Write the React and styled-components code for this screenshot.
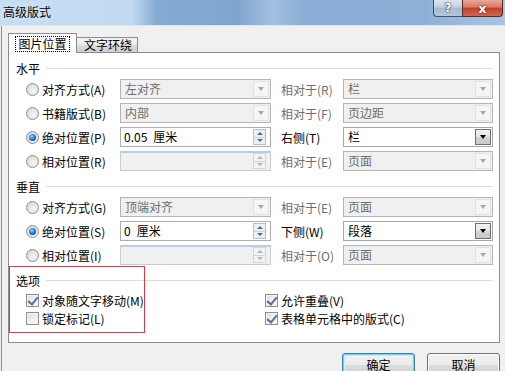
import React from "react";
import styled, { createGlobalStyle } from "styled-components";

const GlobalStyle = createGlobalStyle`
  html, body {
    margin: 0;
    padding: 0;
    background: #f0f0f0;
  }
  * {
    box-sizing: border-box;
  }
`;

const FONT = `"Noto Sans CJK SC", "DejaVu Sans", sans-serif`;

const horizontalRows = [
  { label: "对齐方式(A)", kind: "select", value: "左对齐", side: "相对于(R)", sideValue: "栏" },
  { label: "书籍版式(B)", kind: "select", value: "内部", side: "相对于(F)", sideValue: "页边距" },
  { label: "绝对位置(P)", kind: "spin", value: "0.05\u2002厘米", side: "右侧(T)", sideValue: "栏", active: true },
  { label: "相对位置(R)", kind: "spin", value: "", side: "相对于(E)", sideValue: "页面" },
];

const verticalRows = [
  { label: "对齐方式(G)", kind: "select", value: "顶端对齐", side: "相对于(E)", sideValue: "页面" },
  { label: "绝对位置(S)", kind: "spin", value: "0\u2002厘米", side: "下侧(W)", sideValue: "段落", active: true },
  { label: "相对位置(I)", kind: "spin", value: "", side: "相对于(O)", sideValue: "页面" },
];

const App = () => {
  return (
    <Window>
      <GlobalStyle />
      <TitleBar>
        <Title>高级版式</Title>
        <CaptionButtons>
          <HelpBtn>?</HelpBtn>
          <CloseBtn>x</CloseBtn>
        </CaptionButtons>
      </TitleBar>
      <Frame>
        <TabRow>
          <Tab $active>
            <FocusRing>图片位置</FocusRing>
          </Tab>
          <Tab>文字环绕</Tab>
        </TabRow>
        <Panel>
          <Section>
            <SectionHeader>
              <span>水平</span>
              <Rule />
            </SectionHeader>
            <PositionGrid>
              {horizontalRows.map((row) => (
                <PositionRow key={row.label} row={row} />
              ))}
            </PositionGrid>
          </Section>
          <Section>
            <SectionHeader>
              <span>垂直</span>
              <Rule />
            </SectionHeader>
            <PositionGrid>
              {verticalRows.map((row) => (
                <PositionRow key={row.label} row={row} />
              ))}
            </PositionGrid>
          </Section>
          <OptionsSection>
            <SectionHeader>
              <span>选项</span>
              <Rule />
            </SectionHeader>
            <OptionsGrid>
              <CheckRow>
                <Checkbox $checked />
                <span>对象随文字移动(M)</span>
              </CheckRow>
              <CheckRow>
                <Checkbox $checked />
                <span>允许重叠(V)</span>
              </CheckRow>
              <CheckRow>
                <Checkbox />
                <span>锁定标记(L)</span>
              </CheckRow>
              <CheckRow>
                <Checkbox $checked />
                <span>表格单元格中的版式(C)</span>
              </CheckRow>
            </OptionsGrid>
            <Annotation />
          </OptionsSection>
        </Panel>
        <ButtonRow>
          <DialogButton $default>确定</DialogButton>
          <DialogButton>取消</DialogButton>
        </ButtonRow>
      </Frame>
    </Window>
  );
};

const PositionRow = ({ row }) => {
  const active = !!row.active;
  return (
    <>
      <RadioLabel>
        <Radio $checked={active} />
        <span>{row.label}</span>
      </RadioLabel>
      {row.kind === "select" ? (
        <Select $disabled>
          <SelectValue>{row.value}</SelectValue>
          <DropButton $disabled>
            <Arrow $disabled />
          </DropButton>
        </Select>
      ) : (
        <SpinBox $disabled={!active}>
          <SelectValue>{row.value}</SelectValue>
          <Spinner $disabled={!active}>
            <SpinHalf>
              <SpinArrow $up $disabled={!active} />
            </SpinHalf>
            <SpinHalf>
              <SpinArrow $disabled={!active} />
            </SpinHalf>
          </Spinner>
        </SpinBox>
      )}
      <SideLabel $disabled={!active}>{row.side}</SideLabel>
      <Select $disabled={!active}>
        <SelectValue>{row.sideValue}</SelectValue>
        <DropButton $disabled={!active}>
          <Arrow $disabled={!active} />
        </DropButton>
      </Select>
    </>
  );
};

const Window = styled.div`
  width: 505px;
  height: 371px;
  overflow: hidden;
  background: #f0f0f0;
  font-family: ${FONT};
  font-size: 12px;
  color: #000;
  display: flex;
  flex-direction: column;
`;

const TitleBar = styled.div`
  height: 26px;
  flex: none;
  display: flex;
  justify-content: space-between;
  align-items: flex-start;
  background: linear-gradient(
    90deg,
    #c6def3 0%,
    #c2dbf2 26%,
    #86abd3 31%,
    #7fa5cf 47%,
    #a2c0e1 54%,
    #8aaed6 60%,
    #8eb0d7 84%,
    #a9c4e3 100%
  );
  border-bottom: 1px solid #dce6f1;
`;

const Title = styled.div`
  padding: 4px 0 0 3px;
  line-height: 16px;
  font-size: 12px;
  color: #000;
  text-shadow: 0 0 6px #e6f2ff;
`;

const CaptionButtons = styled.div`
  display: flex;
  margin-right: 2px;
`;

const CaptionBase = styled.div`
  height: 17px;
  display: flex;
  align-items: center;
  justify-content: center;
  color: #fff;
  font-family: "DejaVu Sans", sans-serif;
  font-weight: bold;
  border: 1px solid #42526a;
  border-top: none;
  text-shadow: 0 0 1px #1d2b40, 0 0 2px #1d2b40;
  line-height: 1;
`;

const HelpBtn = styled(CaptionBase)`
  width: 29px;
  font-size: 12px;
  border-right: none;
  border-bottom-left-radius: 4px;
  background: linear-gradient(#dbe4ef 0%, #c3d1e2 45%, #a7b9d0 50%, #b6c7dc 100%);
`;

const CloseBtn = styled(CaptionBase)`
  width: 41px;
  font-size: 13px;
  border-bottom-right-radius: 4px;
  border-color: #5a2a24;
  background: linear-gradient(#e9a99a 0%, #d67a66 45%, #c0412a 50%, #d3664b 100%);
  text-shadow: 0 0 1px #5a1a10, 0 0 2px #5a1a10;
`;

const Frame = styled.div`
  flex: 1;
  margin-left: 1px;
  border-left: 1px solid #7f90a8;
  padding: 7px 5px 0 6px;
  display: flex;
  flex-direction: column;
`;

const TabRow = styled.div`
  display: flex;
  align-items: flex-end;
  height: 19px;
  position: relative;
  z-index: 1;
`;

const Tab = styled.div`
  display: flex;
  align-items: center;
  justify-content: center;
  border: 1px solid #8c8e94;
  border-bottom: none;
  line-height: 14px;
  ${(p) =>
    p.$active
      ? `
    width: 69px;
    height: 20px;
    margin-bottom: -1px;
    background: #fff;
    padding-top: 1px;
  `
      : `
    width: 62px;
    height: 15px;
    margin-left: -1px;
    background: linear-gradient(#f3f3f3 0%, #ebebeb 50%, #dddddd 51%, #cfcfcf 100%);
    padding-left: 2px;
  `}
`;

const FocusRing = styled.span`
  display: inline-block;
  padding: 0 2px;
  outline: 1px dotted #000;
  outline-offset: 0;
  line-height: 14px;
`;

const Panel = styled.div`
  width: 492px;
  height: 291px;
  background: #fff;
  border: 1px solid #898c95;
  padding: 8px 6px 0 7px;
  display: flex;
  flex-direction: column;
  gap: 8px;
`;

const Section = styled.div`
  display: flex;
  flex-direction: column;
  gap: 2px;
`;

const SectionHeader = styled.div`
  display: flex;
  align-items: center;
  height: 16px;
  line-height: 16px;
  gap: 6px;
`;

const Rule = styled.div`
  flex: 1;
  height: 1px;
  background: #d5dfe5;
  margin-top: -1px;
`;

const PositionGrid = styled.div`
  display: grid;
  grid-template-columns: 94px 151px 72px 150px;
  grid-auto-rows: 20px;
  row-gap: 4px;
  padding-left: 10px;
  align-items: center;
`;

const RadioLabel = styled.label`
  display: flex;
  align-items: center;
  gap: 3px;
  white-space: nowrap;
`;

const Radio = styled.span`
  width: 13px;
  height: 13px;
  border-radius: 50%;
  border: 1px solid #8e8f8f;
  background: radial-gradient(circle at 60% 65%, #f6f6f6 0%, #e2e2e2 55%, #cdcdcd 100%);
  display: flex;
  align-items: center;
  justify-content: center;
  &::after {
    content: "";
    display: ${(p) => (p.$checked ? "block" : "none")};
    width: 7px;
    height: 7px;
    border-radius: 50%;
    background: radial-gradient(circle at 40% 35%, #8fd3ff 0%, #2a8ee0 40%, #0b4f9e 75%, #063a78 100%);
  }
`;

const fieldBorder = (p) => (p.$disabled ? "#b5b5b5" : "#a4a9b0");

const Select = styled.div`
  height: 20px;
  display: flex;
  align-items: stretch;
  border: 1px solid ${fieldBorder};
  background: ${(p) => (p.$disabled ? "#f0f0f0" : "#fff")};
  color: ${(p) => (p.$disabled ? "#6d6d6d" : "#000")};
  padding: 1px;
`;

const SelectValue = styled.span`
  flex: 1;
  padding-left: 3px;
  line-height: 16px;
  white-space: pre;
  overflow: hidden;
`;

const DropButton = styled.span`
  width: 16px;
  display: flex;
  align-items: center;
  justify-content: center;
  border: 1px solid ${(p) => (p.$disabled ? "#e2e2e2" : "#707070")};
  background: ${(p) =>
    p.$disabled ? "#f5f5f5" : "linear-gradient(#f2f2f2 0%, #e6e6e6 50%, #d4d4d4 51%, #c8c8c8 100%)"};
`;

const Arrow = styled.span`
  width: 0;
  height: 0;
  border-left: 3.5px solid transparent;
  border-right: 3.5px solid transparent;
  border-top: 4px solid ${(p) => (p.$disabled ? "#a6a6a6" : "#000")};
`;

const SpinBox = styled.div`
  height: 20px;
  display: flex;
  align-items: stretch;
  border: 1px solid ${(p) => (p.$disabled ? "#c9ccd1" : "#abadb3")};
  border-top-color: ${(p) => (p.$disabled ? "#b4cfeb" : "#abadb3")};
  border-top-width: ${(p) => (p.$disabled ? "2px" : "1px")};
  background: ${(p) => (p.$disabled ? "#f0f0f0" : "#fff")};
  padding: ${(p) => (p.$disabled ? "0 4px 1px 0" : "1px 4px 1px 0")};
`;

const Spinner = styled.span`
  width: 13px;
  display: flex;
  flex-direction: column;
  border: 1px solid ${(p) => (p.$disabled ? "#d6d6d6" : "#b8bcc3")};
  background: ${(p) => (p.$disabled ? "#f4f4f4" : "#eef0f4")};
`;

const SpinHalf = styled.span`
  flex: 1;
  display: flex;
  align-items: center;
  justify-content: center;
  & + & {
    border-top: 1px solid #d0d3d8;
  }
`;

const SpinArrow = styled.span`
  width: 0;
  height: 0;
  border-left: 3px solid transparent;
  border-right: 3px solid transparent;
  ${(p) => (p.$up ? "border-bottom" : "border-top")}: 3px solid
    ${(p) => (p.$disabled ? "#b3b3b3" : "#4d6a9c")};
`;

const SideLabel = styled.span`
  padding-left: 10px;
  white-space: nowrap;
  color: ${(p) => (p.$disabled ? "#6d6d6d" : "#000")};
`;

const OptionsSection = styled.div`
  position: relative;
  display: flex;
  flex-direction: column;
  gap: 2px;
`;

const OptionsGrid = styled.div`
  display: grid;
  grid-template-columns: 239px 1fr;
  grid-auto-rows: 18px;
  padding-left: 10px;
  align-items: center;
`;

const CheckRow = styled.label`
  display: flex;
  align-items: center;
  gap: 3px;
  white-space: nowrap;
`;

const Checkbox = styled.span`
  width: 13px;
  height: 13px;
  border: 1px solid #8f8f8f;
  background: linear-gradient(135deg, #dcdcdc 0%, #eeeeee 50%, #fbfbfb 100%);
  box-shadow: inset 0 0 0 1px #f4f4f4;
  position: relative;
  &::after {
    content: "";
    display: ${(p) => (p.$checked ? "block" : "none")};
    position: absolute;
    left: 3px;
    top: 0px;
    width: 4px;
    height: 8px;
    border-right: 2px solid #5a6ea0;
    border-bottom: 2px solid #5a6ea0;
    transform: rotate(40deg);
  }
`;

const Annotation = styled.div`
  position: absolute;
  left: -7px;
  top: -7px;
  width: 136px;
  height: 67px;
  border: 1px solid #e8383d;
  pointer-events: none;
`;

const ButtonRow = styled.div`
  display: flex;
  justify-content: flex-end;
  gap: 12px;
  padding-top: 10px;
  width: 492px;
`;

const DialogButton = styled.button`
  width: 73px;
  height: 23px;
  font-family: ${FONT};
  font-size: 12px;
  line-height: 16px;
  color: #000;
  border-radius: 3px;
  padding: 0;
  border: 1px solid ${(p) => (p.$default ? "#3c7fb1" : "#707070")};
  background: linear-gradient(#f2f2f2 0%, #ebebeb 50%, #dddddd 51%, #cfcfcf 100%);
  box-shadow: ${(p) => (p.$default ? "inset 0 0 0 1px #6fd0f5, inset 0 0 0 2px #c8ecfb" : "inset 0 0 0 1px #fcfcfc")};
`;

export default App;
